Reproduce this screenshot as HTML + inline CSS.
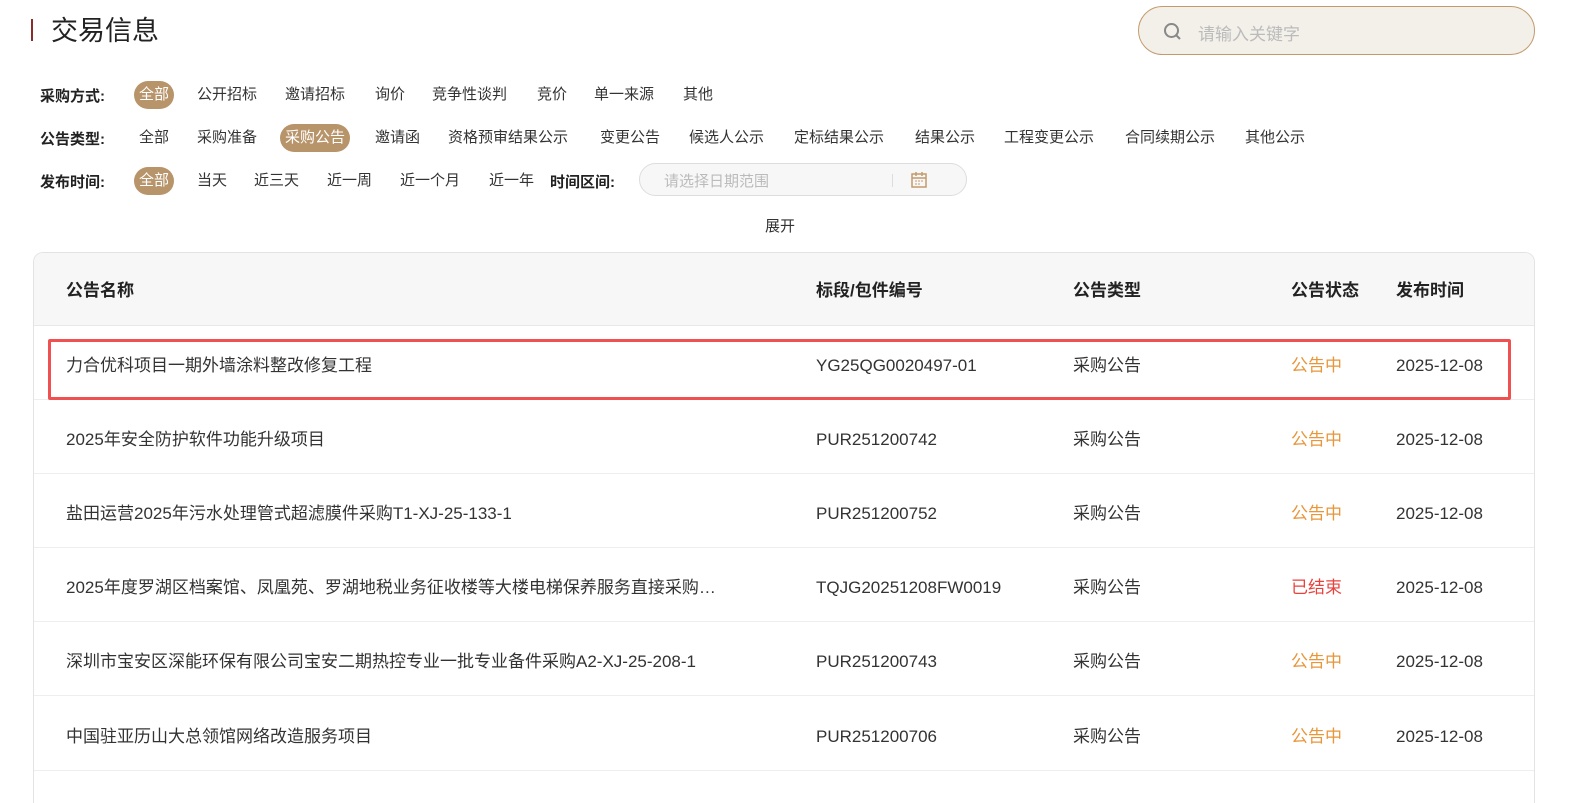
<!DOCTYPE html>
<html><head><meta charset="utf-8"><style>
*{margin:0;padding:0;box-sizing:border-box}
html{width:1578px;height:803px;overflow:hidden}
body{width:1578px;height:803px;overflow:hidden;background:#fff;font-family:"Liberation Sans","Noto Sans CJK SC",sans-serif;color:#333;position:relative}
.a{position:absolute;white-space:nowrap}
.bar{left:31px;top:19px;width:2px;height:22px;background:#8b2c2c}
.title{left:51px;top:12px;font-size:27px;color:#222;line-height:38px}
.search{left:1138px;top:6px;width:397px;height:49px;border:1px solid #c49a6c;border-radius:25px;background:#f3f0ea}
.search span{position:absolute;left:59px;top:13px;font-size:17px;color:#bbb}
.lbl{font-size:15px;font-weight:bold;color:#222;line-height:20px}
.it{font-size:15px;color:#333;line-height:28px}
.pill{background:#b8946a;color:#fff;border-radius:14px;padding:0 5px;height:28px}
.date{left:639px;top:163px;width:328px;height:33px;border:1px solid #ddd;border-radius:17px;background:#f7f7f7}
.date span{position:absolute;left:24px;top:6px;font-size:15px;color:#bbb}
.tbl{left:33px;top:252px;width:1502px;height:551px;border:1px solid #e3e3e3;border-bottom:none;border-radius:10px 10px 0 0;overflow:hidden}
.hd{position:absolute;left:0;top:0;width:100%;height:73px;background:#f7f7f7;border-bottom:1px solid #e8e8e8}
.th{font-size:17px;font-weight:bold;color:#222;line-height:24px;top:26px}
.row{position:absolute;left:0;width:100%;height:74px;border-bottom:1px solid #eee}
.td{font-size:17px;color:#333;top:28px;line-height:24px;height:24px}
.o{color:#e8963a}.r{color:#e8423c}
.box{left:48px;top:339px;width:1463px;height:61px;border:3px solid #f05050;border-radius:2px}
</style></head><body>
<div class="a bar"></div><div class="a title">交易信息</div>
<div class="a search"><svg style="position:absolute;left:24px;top:15px" width="20" height="20" viewBox="0 0 20 20"><circle cx="8.5" cy="8.5" r="6.5" fill="none" stroke="#888" stroke-width="2"/><path d="M13 13l4 4" stroke="#888" stroke-width="2"/></svg><span>请输入关键字</span></div>

<div class="a lbl" style="left:40px;top:87px">采购方式:</div>
<div class="a it pill" style="left:134px;top:81px">全部</div>
<div class="a it" style="left:197px;top:81px">公开招标</div>
<div class="a it" style="left:285px;top:81px">邀请招标</div>
<div class="a it" style="left:375px;top:81px">询价</div>
<div class="a it" style="left:432px;top:81px">竞争性谈判</div>
<div class="a it" style="left:537px;top:81px">竞价</div>
<div class="a it" style="left:594px;top:81px">单一来源</div>
<div class="a it" style="left:683px;top:81px">其他</div>

<div class="a lbl" style="left:40px;top:130px">公告类型:</div>
<div class="a it" style="left:139px;top:124px">全部</div>
<div class="a it" style="left:197px;top:124px">采购准备</div>
<div class="a it pill" style="left:280px;top:124px">采购公告</div>
<div class="a it" style="left:375px;top:124px">邀请函</div>
<div class="a it" style="left:448px;top:124px">资格预审结果公示</div>
<div class="a it" style="left:600px;top:124px">变更公告</div>
<div class="a it" style="left:689px;top:124px">候选人公示</div>
<div class="a it" style="left:794px;top:124px">定标结果公示</div>
<div class="a it" style="left:915px;top:124px">结果公示</div>
<div class="a it" style="left:1004px;top:124px">工程变更公示</div>
<div class="a it" style="left:1125px;top:124px">合同续期公示</div>
<div class="a it" style="left:1245px;top:124px">其他公示</div>

<div class="a lbl" style="left:40px;top:173px">发布时间:</div>
<div class="a it pill" style="left:134px;top:167px">全部</div>
<div class="a it" style="left:197px;top:167px">当天</div>
<div class="a it" style="left:254px;top:167px">近三天</div>
<div class="a it" style="left:327px;top:167px">近一周</div>
<div class="a it" style="left:400px;top:167px">近一个月</div>
<div class="a it" style="left:489px;top:167px">近一年</div>
<div class="a lbl" style="left:550px;top:173px">时间区间:</div>
<div class="a date"><span>请选择日期范围</span><div style="position:absolute;left:252px;top:10px;width:1px;height:13px;background:#ddd"></div><svg style="position:absolute;left:270px;top:7px" width="18" height="18" viewBox="0 0 18 18"><rect x="2" y="3" width="14" height="13" fill="none" stroke="#c49a6c" stroke-width="1.5"/><path d="M2 7h14M6 1v4M12 1v4" stroke="#c49a6c" stroke-width="1.5"/><path d="M5 10h2M8 10h2M11 10h2M5 13h2M8 13h2" stroke="#c49a6c"/></svg></div>
<div class="a it" style="left:765px;top:213px">展开</div>

<div class="a tbl">
<div class="hd">
<div class="a th" style="left:32px">公告名称</div>
<div class="a th" style="left:782px">标段/包件编号</div>
<div class="a th" style="left:1039px">公告类型</div>
<div class="a th" style="left:1257px">公告状态</div>
<div class="a th" style="left:1362px">发布时间</div>
</div>
<div class="row" style="top:73px"><div class="a td" style="left:32px">力合优科项目一期外墙涂料整改修复工程</div><div class="a td" style="left:782px">YG25QG0020497-01</div><div class="a td" style="left:1039px">采购公告</div><div class="a td o" style="left:1257px">公告中</div><div class="a td" style="left:1362px">2025-12-08</div></div>
<div class="row" style="top:147px"><div class="a td" style="left:32px">2025年安全防护软件功能升级项目</div><div class="a td" style="left:782px">PUR251200742</div><div class="a td" style="left:1039px">采购公告</div><div class="a td o" style="left:1257px">公告中</div><div class="a td" style="left:1362px">2025-12-08</div></div>
<div class="row" style="top:221px"><div class="a td" style="left:32px">盐田运营2025年污水处理管式超滤膜件采购T1-XJ-25-133-1</div><div class="a td" style="left:782px">PUR251200752</div><div class="a td" style="left:1039px">采购公告</div><div class="a td o" style="left:1257px">公告中</div><div class="a td" style="left:1362px">2025-12-08</div></div>
<div class="row" style="top:295px"><div class="a td" style="left:32px">2025年度罗湖区档案馆、凤凰苑、罗湖地税业务征收楼等大楼电梯保养服务直接采购…</div><div class="a td" style="left:782px">TQJG20251208FW0019</div><div class="a td" style="left:1039px">采购公告</div><div class="a td r" style="left:1257px">已结束</div><div class="a td" style="left:1362px">2025-12-08</div></div>
<div class="row" style="top:369px"><div class="a td" style="left:32px">深圳市宝安区深能环保有限公司宝安二期热控专业一批专业备件采购A2-XJ-25-208-1</div><div class="a td" style="left:782px">PUR251200743</div><div class="a td" style="left:1039px">采购公告</div><div class="a td o" style="left:1257px">公告中</div><div class="a td" style="left:1362px">2025-12-08</div></div>
<div class="row" style="top:444px"><div class="a td" style="left:32px">中国驻亚历山大总领馆网络改造服务项目</div><div class="a td" style="left:782px">PUR251200706</div><div class="a td" style="left:1039px">采购公告</div><div class="a td o" style="left:1257px">公告中</div><div class="a td" style="left:1362px">2025-12-08</div></div>
</div>
<div class="a box"></div>
</body></html>
